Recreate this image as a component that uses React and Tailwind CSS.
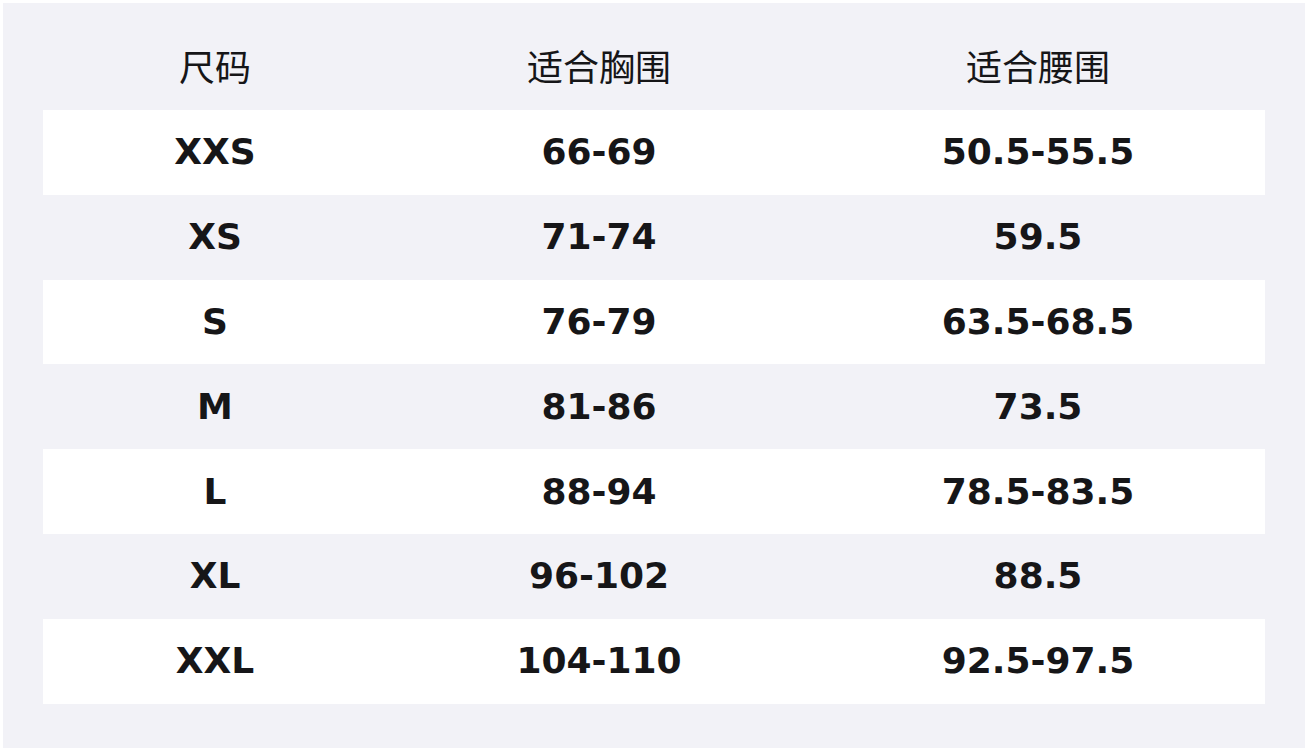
export default function App() {
  const rows = [
    ["XXS", "66-69", "50.5-55.5"],
    ["XS", "71-74", "59.5"],
    ["S", "76-79", "63.5-68.5"],
    ["M", "81-86", "73.5"],
    ["L", "88-94", "78.5-83.5"],
    ["XL", "96-102", "88.5"],
    ["XXL", "104-110", "92.5-97.5"],
  ];
  const cols = "grid grid-cols-[344px_424px_454px]";
  return (
    <div className="w-[1308px] h-[748px] bg-white pt-[3px] pl-[3px] overflow-hidden">
      <div
        className="w-[1302px] h-[760px] bg-[#f2f2f7] pt-[22px] px-[40px] text-[#161618]"
        style={{ fontFamily: '"DejaVu Sans", "Noto Sans CJK SC", sans-serif' }}
      >
        <div className={`${cols} h-[85px] pb-[6px] items-center text-[36px] font-normal`} style={{ fontFamily: '"Noto Sans CJK SC", sans-serif' }}>
          <div className="text-center">尺码</div>
          <div className="text-center">适合胸围</div>
          <div className="text-center">适合腰围</div>
        </div>
        {rows.map((r, i) => (
          <div
            key={i}
            className={`${cols} h-[84.8px] items-center text-[36px] font-bold ${i % 2 === 0 ? "bg-white" : ""}`}
          >
            {r.map((c, j) => (
              <div key={j} className="text-center">{c}</div>
            ))}
          </div>
        ))}
      </div>
    </div>
  );
}
